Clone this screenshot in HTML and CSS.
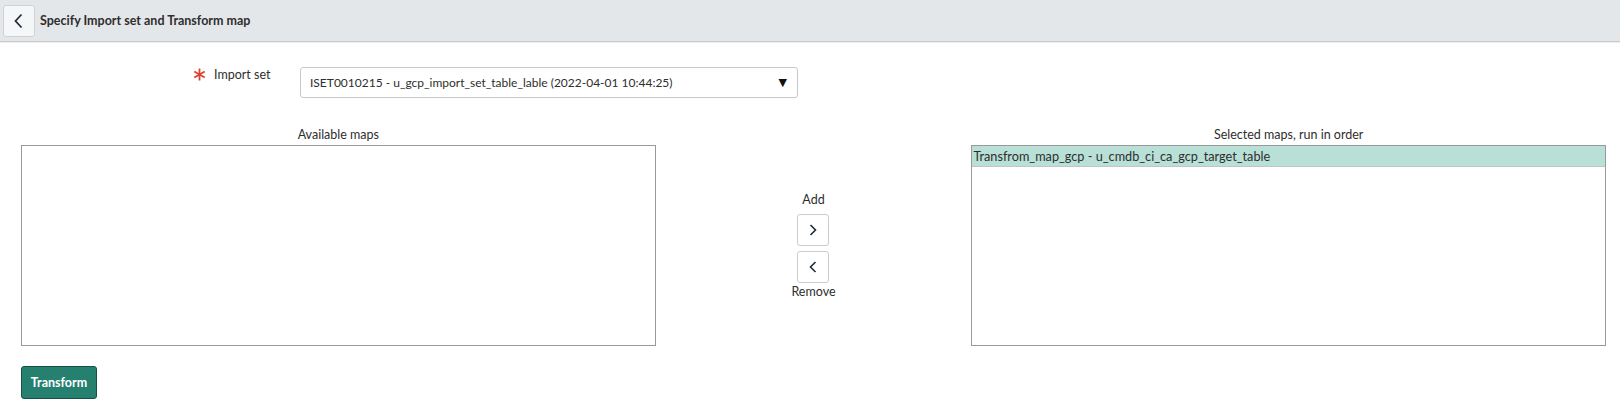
FILE: index.html
```html
<!DOCTYPE html>
<html lang="en">
<head>
  <meta charset="UTF-8">
  <title>Specify Import set and Transform map</title>
  <link rel="stylesheet" href="styles.css">
</head>
<body>
  <div class="nav-header">
    <button class="back-btn" title="Back">
      <svg width="14" height="16" viewBox="0 0 14 16"><polyline points="9.5,1.5 3.5,8 9.5,14.5" fill="none" stroke="#1f2a33" stroke-width="1.7"/></svg>
    </button>
    <span class="nav-title">Specify Import set and Transform map</span>
  </div>

  <div class="form">
    <div class="field-row">
      <div class="field-label">
        <svg class="mandatory" width="13" height="13" viewBox="0 0 13 13">
          <g stroke="#d9432f" stroke-width="1.8" stroke-linecap="butt">
            <line x1="6.5" y1="0.5" x2="6.5" y2="12.5"/>
            <line x1="1.3" y1="3.5" x2="11.7" y2="9.5"/>
            <line x1="1.3" y1="9.5" x2="11.7" y2="3.5"/>
          </g>
        </svg>
        <span>Import set</span>
      </div>
      <div class="select-box">
        <span>ISET0010215 - u_gcp_import_set_table_lable (2022-04-01 10:44:25)</span>
        <span class="caret">&#9660;</span>
      </div>
    </div>

    <div class="bucket">
      <div class="bucket-col left">
        <div class="bucket-label">Available maps</div>
        <div class="bucket-box"></div>
      </div>

      <div class="bucket-mid">
        <div class="mid-text">Add</div>
        <button class="move-btn add">
          <svg width="12" height="14" viewBox="0 0 12 14"><polyline points="3.5,2 8.5,7 3.5,12" fill="none" stroke="#1f2a33" stroke-width="1.6"/></svg>
        </button>
        <button class="move-btn remove">
          <svg width="12" height="14" viewBox="0 0 12 14"><polyline points="8.5,2 3.5,7 8.5,12" fill="none" stroke="#1f2a33" stroke-width="1.6"/></svg>
        </button>
        <div class="mid-text">Remove</div>
      </div>

      <div class="bucket-col right">
        <div class="bucket-label">Selected maps, run in order</div>
        <div class="bucket-box">
          <div class="bucket-item selected">Transfrom_map_gcp - u_cmdb_ci_ca_gcp_target_table</div>
        </div>
      </div>
    </div>

    <button class="transform-btn">Transform</button>
  </div>
</body>
</html>
```

FILE: styles.css
```css
body {
  font-family: 'Lato', 'Liberation Sans', sans-serif;
  margin: 0;
  padding: 0;
  background-color: #fff;
  color: #2e2e2e;
}

.nav-header {
  display: flex;
  align-items: center;
  height: 41px;
  padding-left: 3px;
  background-color: #e4e7ea;
  border-bottom: 1px solid #c9cccf;
  box-shadow: 0 1px 0 #eceeef;
}

.back-btn {
  display: flex;
  align-items: center;
  justify-content: center;
  width: 32px;
  height: 32px;
  padding: 0;
  margin-right: 5px;
  background-color: #f5f6f7;
  border: 1px solid #cfd2d5;
  border-radius: 3px;
}

.nav-title {
  font-size: 12.5px;
  font-weight: bold;
  color: #2e2e2e;
}

.form {
  padding: 25px 14px 0 21px;
}

.field-row {
  display: flex;
  align-items: flex-start;
  padding-left: 172px;
}

.field-label {
  display: flex;
  align-items: center;
  width: 107px;
  padding-top: 0;
  font-size: 12.5px;
}

.mandatory {
  margin-right: 8px;
}

.select-box {
  display: flex;
  align-items: center;
  justify-content: space-between;
  box-sizing: border-box;
  width: 498px;
  height: 31px;
  padding: 0 10px 0 9px;
  border: 1px solid #c6c9cc;
  border-radius: 3px;
  font-size: 12px;
  color: #2e2e2e;
}

.caret {
  font-size: 11px;
  color: #111;
  font-family: 'DejaVu Sans', sans-serif;
}

.bucket {
  display: flex;
  margin-top: 29px;
}

.bucket-col {
  display: flex;
  flex-direction: column;
  width: 635px;
}

.bucket-label {
  height: 18px;
  font-size: 12.5px;
  text-align: center;
  line-height: 16px;
}

.bucket-box {
  box-sizing: border-box;
  height: 201px;
  border: 1px solid #999;
  padding: 0;
}

.bucket-item {
  height: 20px;
  line-height: 20px;
  padding-left: 1px;
  font-size: 12.7px;
  color: #2e2e2e;
}

.bucket-item.selected {
  background-color: #b8e0d6;
  border-bottom: 1px solid #c4c4c4;
}

.bucket-mid {
  display: flex;
  flex-direction: column;
  align-items: center;
  justify-content: center;
  width: 316px;
  height: 201px;
  margin-top: 18px;
}

.mid-text {
  font-size: 12.5px;
  line-height: 16px;
}

.move-btn {
  display: flex;
  align-items: center;
  justify-content: center;
  width: 32px;
  height: 32px;
  padding: 0;
  background-color: #fff;
  border: 1px solid #ccc;
  border-radius: 3px;
}

.move-btn.add {
  margin-top: 6px;
}

.move-btn.remove {
  margin-top: 5px;
  margin-bottom: 1px;
}

.transform-btn {
  margin-top: 20px;
  width: 76px;
  height: 33px;
  padding: 0;
  background-color: #26806f;
  border: 1px solid #184f45;
  border-radius: 3px;
  color: #fff;
  font-family: 'Lato', 'Liberation Sans', sans-serif;
  font-size: 12.5px;
  font-weight: bold;
}
```
